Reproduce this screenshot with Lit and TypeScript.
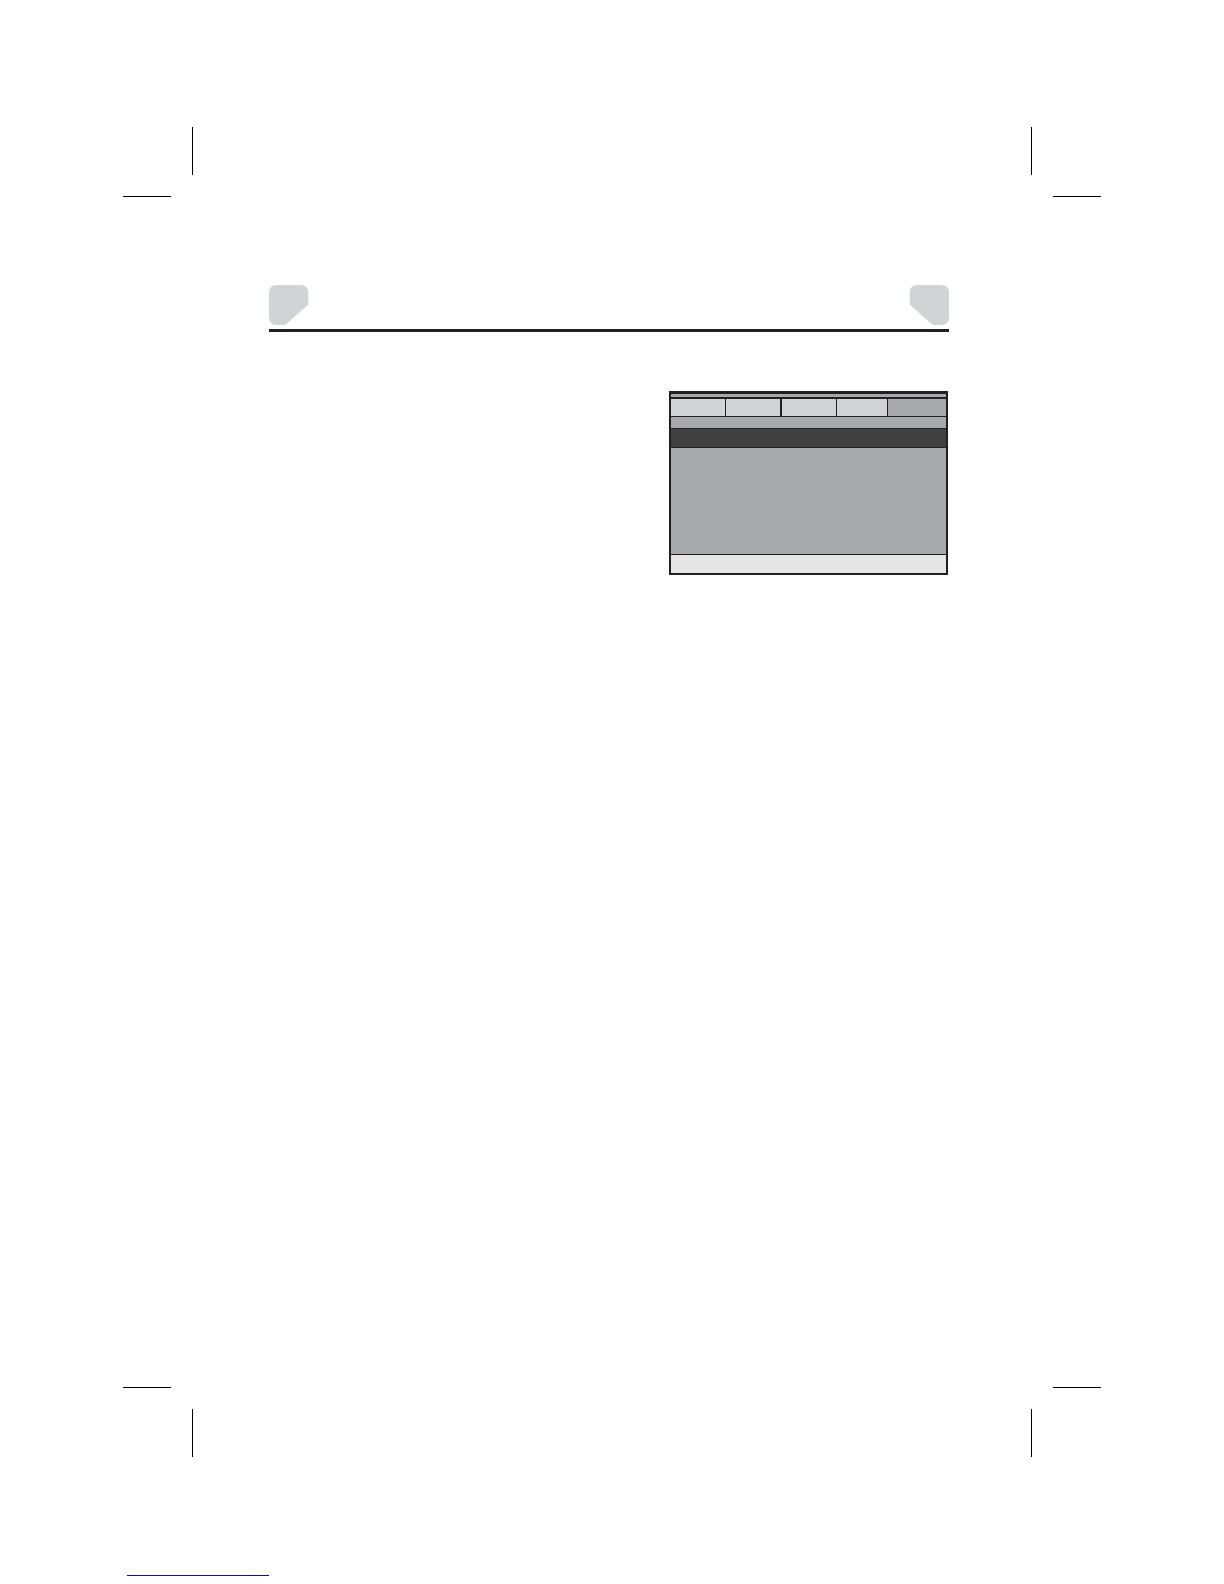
import { html, css, svg, LitElement } from 'lit';
import { customElement, property, state } from 'lit/decorators.js';
import { classMap } from 'lit/directives/class-map.js';

// vertical printer's marks sit outside the trim, horizontal ones beside it
@customElement('crop-marks')
export class CropMarks extends LitElement {

    @property({ type: Boolean, reflect: true }) bottom = false;

    static styles = css`
    :host {
      display: flex;
      flex-direction: column;
      gap: 21px;
    }

    :host([bottom]) {
      flex-direction: column-reverse;
    }

    .upright, .level {
      display: flex;
      justify-content: space-between;
    }

    .upright {
      padding: 0 192px;
    }

    .level {
      padding: 0 123px;
    }

    .upright .mark {
      width: 1px;
      height: 48px;
      background: #000;
    }

    .level .mark {
      width: 48px;
      height: 1px;
      background: #000;
    }
  `;

    render() {
        return html`
        <div class="upright"><div class="mark"></div><div class="mark"></div></div>
        <div class="level"><div class="mark"></div><div class="mark"></div></div>
    `;
    }
}

@customElement('osd-menu')
export class OsdMenu extends LitElement {

    @state() selected = 4;

    static styles = css`
    :host {
      --_line: #231f20;
      --_panel: #a7a9ac;
      display: block;
      box-sizing: border-box;
      border: 2px solid var(--_line);
      border-top-width: 3px;
      background: var(--_panel);
    }

    .title {
      height: 3px;
      border-bottom: 2px solid var(--_line);
    }

    .tabs {
      display: grid;
      grid-template-columns: 55fr 56fr 55fr 51fr 58fr;
      height: 17px;
      border-bottom: 1px solid var(--_line);
    }

    .tab {
      appearance: none;
      margin: 0;
      padding: 0;
      border: 0 solid var(--_line);
      border-right-width: 1px;
      border-radius: 0;
      background: #d1d3d4;
    }

    .tab:nth-child(2) {
      border-right-width: 2px;
    }

    .tab:last-child {
      border-right-width: 0;
    }

    .tab.selected {
      background: var(--_panel);
    }

    .subtitle {
      height: 11px;
      background: #a7a9ab;
    }

    .current {
      height: 18px;
      border: 1px solid var(--_line);
      border-width: 1px 0;
      background: #404040;
    }

    .items {
      height: 106px;
    }

    .hints {
      height: 18px;
      border-top: 1px solid var(--_line);
      background: #e6e6e7;
    }
  `;

    render() {
        return html`
        <div class="title"></div>
        <div class="tabs" role="tablist">
          ${[0, 1, 2, 3, 4].map(index => html`
            <button
              type="button"
              role="tab"
              class=${classMap({ tab: true, selected: index === this.selected })}
              aria-selected=${index === this.selected ? 'true' : 'false'}
              @click=${() => (this.selected = index)}
            ></button>`)}
        </div>
        <div class="subtitle"></div>
        <div class="current"></div>
        <div class="items"></div>
        <div class="hints"></div>
    `;
    }
}

const corner = svg`<path fill="#d1d3d4" d="M8 0H31Q39.300 0 39.300 8V19.500L18 38.500Q16 40 14 40H8Q0 40 0 32V8Q0 0 8 0Z"/>`;

@customElement('app-root')
export class AppRoot extends LitElement {

    static styles = css`
    :host {
      display: block;
      font-family: "Liberation Sans", Arial, sans-serif;
      background: #fff;
    }

    .sheet {
      display: flex;
      flex-direction: column;
      box-sizing: border-box;
      min-height: 100vh;
      padding: 127px 0 8px;
    }

    .content {
      flex: 1;
      padding: 88px 275px 0 269px;
    }

    .heading {
      display: flex;
      justify-content: space-between;
      padding-bottom: 4px;
      border-bottom: 3px solid #231f20;
    }

    .corner {
      display: block;
      width: 40px;
      height: 40px;
    }

    .corner.mirrored {
      transform: scaleX(-1);
    }

    .figure {
      display: flex;
      justify-content: flex-end;
      margin: 0;
      padding: 59px 1px 0 0;
    }

    osd-menu {
      width: 100%;
      max-width: 279px;
    }

    .footer {
      padding: 118px 127px 0;
    }

    .underline {
      width: 142px;
      height: 1px;
      background: #10108a;
    }
  `;

    render() {
        return html`
        <div class="sheet">
          <crop-marks></crop-marks>
          <main class="content">
            <header class="heading">
              <svg class="corner" viewBox="0 0 40 40" aria-hidden="true">${corner}</svg>
              <svg class="corner mirrored" viewBox="0 0 40 40" aria-hidden="true">${corner}</svg>
            </header>
            <figure class="figure"><osd-menu></osd-menu></figure>
          </main>
          <crop-marks bottom></crop-marks>
          <footer class="footer"><div class="underline"></div></footer>
        </div>
    `;
    }
}

declare global {
    interface HTMLElementTagNameMap {
        'app-root': AppRoot
        'crop-marks': CropMarks
        'osd-menu': OsdMenu
    }
}
